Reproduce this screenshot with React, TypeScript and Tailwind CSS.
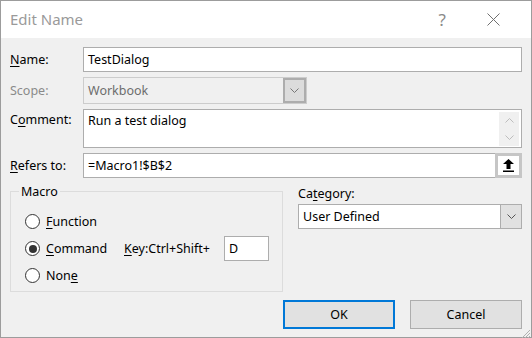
import React from "react";

const FONT = { fontFamily: '"Noto Sans", "Open Sans", sans-serif' };

function U({ children }: { children: React.ReactNode }) {
  return <span className="underline underline-offset-2">{children}</span>;
}

function Chevron({ className = "" }: { className?: string }) {
  return (
    <svg width="9" height="5" viewBox="0 0 9 5" className={className}>
      <path d="M0.5 0.5 L4.5 4.5 L8.5 0.5" fill="none" stroke="currentColor" strokeWidth="1" />
    </svg>
  );
}

function Radio({ checked, label }: { checked?: boolean; label: React.ReactNode }) {
  return (
    <div className="flex items-center gap-[6px]">
      <span className="flex h-[15px] w-[15px] items-center justify-center rounded-full border border-[#333] bg-white">
        {checked && <span className="h-[8px] w-[8px] rounded-full bg-[#333]" />}
      </span>
      <span>{label}</span>
    </div>
  );
}

export default function App() {
  return (
    <div
      style={FONT}
      className="flex h-[338px] w-[532px] flex-col border border-[#9c9c9c] bg-[#f0f0f0] text-[12.5px] leading-[17px] text-black"
    >
      {/* title bar */}
      <div className="flex h-[37px] shrink-0 items-center bg-white pl-[9px] pr-[30px]">
        <span className="text-[15px] text-[#9a9a9a]">Edit Name</span>
        <span className="ml-auto mr-[40px] text-[17px] text-[#8a8a8a]">?</span>
        <svg width="15" height="13" viewBox="0 0 15 13">
          <path d="M1.5 0.5 L13.5 12.5 M13.5 0.5 L1.5 12.5" stroke="#6f6f6f" strokeWidth="1" />
        </svg>
      </div>

      <div className="flex flex-1 flex-col px-[9px] pt-[9px]">
        <div className="grid grid-cols-[73px_1fr] gap-y-[5px]">
          <div className="flex h-[25px] items-center">
            <U>N</U>ame:
          </div>
          <div className="flex h-[25px] items-center border border-[#adadad] bg-white px-[4px]">TestDialog</div>

          <div className="flex h-[27px] items-center text-[#8a8a8a]">Scope:</div>
          <div className="flex h-[27px] w-[224px] border border-[#cccccc] bg-[#f0f0f0]">
            <div className="flex flex-1 items-center px-[4px] text-[#6d6d6d]">Workbook</div>
            <div className="flex w-[23px] items-center justify-center border-2 border-[#adadad] bg-[#dcdcdc] text-[#777]">
              <Chevron />
            </div>
          </div>

          <div className="h-[39px] pt-[2px]">
            C<U>o</U>mment:
          </div>
          <div className="flex h-[39px] border border-[#adadad] bg-white pl-[4px] pr-[2px] pt-[2px]">
            <div className="flex-1">Run a test dialog</div>
            <div className="flex h-[34px] w-[20px] flex-col items-center justify-around bg-[#f0f0f0] text-[#bdbdbd]">
              <Chevron className="rotate-180" />
              <Chevron />
            </div>
          </div>

          <div className="flex h-[25px] items-center">
            <U>R</U>efers to:
          </div>
          <div className="flex h-[25px] border border-[#adadad] bg-white">
            <div className="flex flex-1 items-center px-[4px]">=Macro1!$B$2</div>
            <div className="-my-px -mr-px flex w-[27px] items-center justify-center border-[3px] border-[#c6c6c6] bg-white">
              <svg width="11" height="13" viewBox="0 0 11 13">
                <path d="M5.5 0 L11 5 L7.5 5 L7.5 10 L3.5 10 L3.5 5 L0 5 Z" fill="#000" />
                <rect x="0" y="11.5" width="11" height="1.5" fill="#000" />
              </svg>
            </div>
          </div>
        </div>

        <div className="mt-[5px] flex">
          <fieldset className="h-[109px] w-[273px] border border-[#dcdcdc]">
            <legend className="ml-[8px] px-[2px]">Macro</legend>
            <div className="flex flex-col gap-[6px] pl-[14px] pt-[13px]">
              <Radio label={<><U>F</U>unction</>} />
              <div className="flex items-center">
                <div className="w-[99px]">
                  <Radio checked label={<><U>C</U>ommand</>} />
                </div>
                <span>
                  <U>K</U>ey:Ctrl+Shift+
                </span>
                <div className="ml-auto mr-[13px] flex h-[25px] w-[45px] items-center border border-[#adadad] bg-white px-[4px]">
                  D
                </div>
              </div>
              <Radio label={<>Non<U>e</U></>} />
            </div>
          </fieldset>

          <div className="ml-[15px] flex flex-1 flex-col pt-[2px]">
            <div className="h-[19px]">
              Ca<U>t</U>egory:
            </div>
            <div className="flex h-[25px] border border-[#adadad] bg-white">
              <div className="flex flex-1 items-center px-[4px]">User Defined</div>
              <div className="-my-px -mr-px flex w-[22px] items-center justify-center border border-[#adadad] bg-[#e1e1e1] text-[#555]">
                <Chevron />
              </div>
            </div>
          </div>
        </div>

        <div className="mt-[8px] flex justify-end gap-[15px]">
          <button className="h-[29px] w-[112px] border-2 border-[#0078d7] bg-[#e1e1e1]">OK</button>
          <button className="h-[29px] w-[112px] border border-[#adadad] bg-[#e1e1e1]">Cancel</button>
        </div>

        <div className="mt-auto -mr-[9px] flex justify-end">
          <svg width="10" height="10" viewBox="0 0 10 10">
            <path d="M9 1 L1 9 M9 4 L4 9 M9 7 L7 9" stroke="#b0b0b0" strokeWidth="1" />
          </svg>
        </div>
      </div>
    </div>
  );
}
